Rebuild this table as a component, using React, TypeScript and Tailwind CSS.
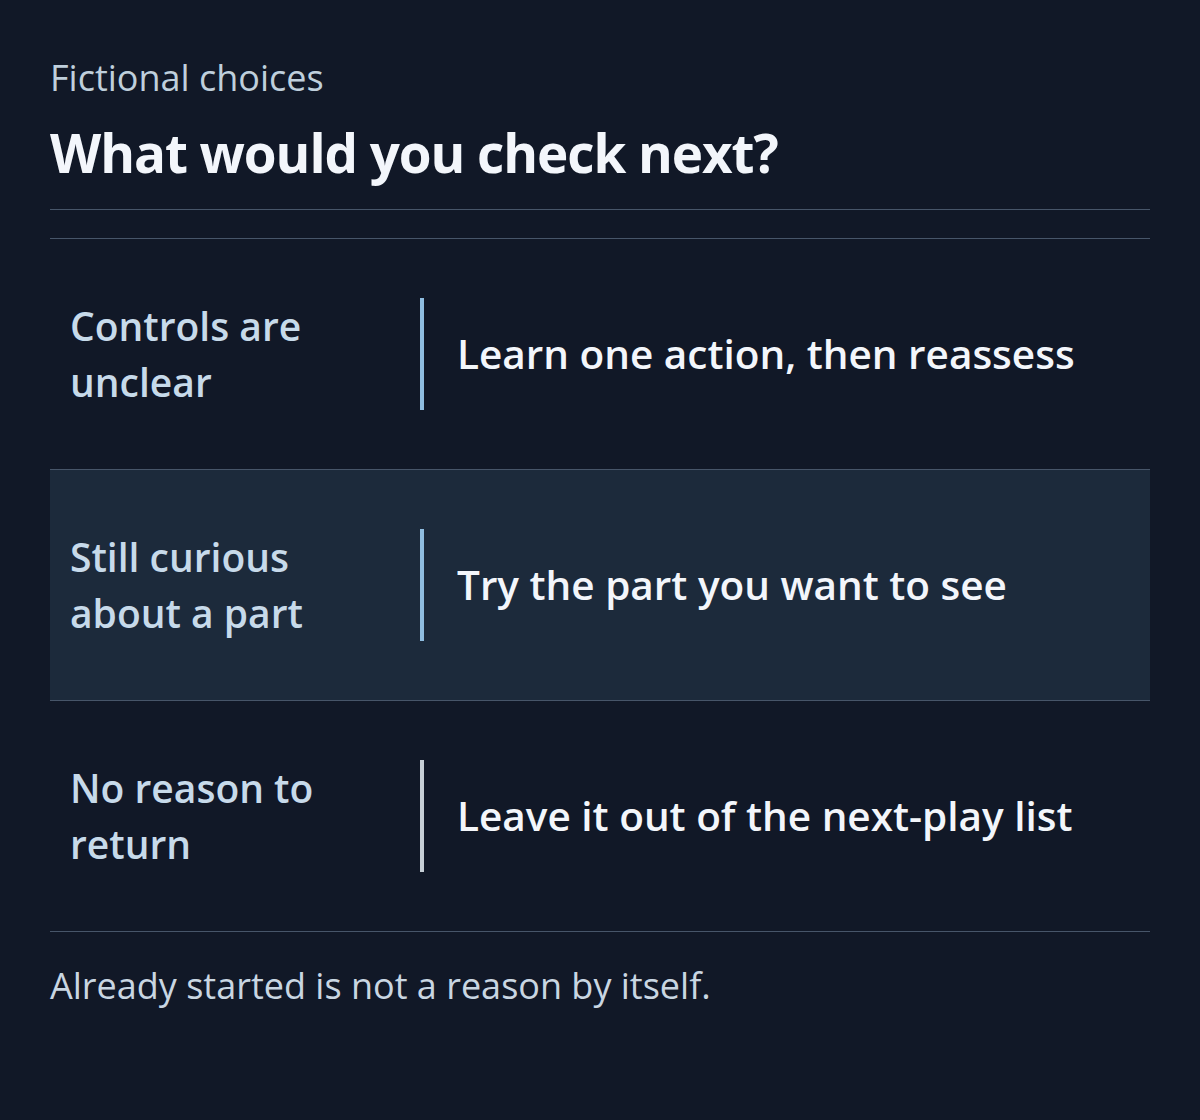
const rows = [
  {
    label: ["Controls are", "unclear"],
    action: "Learn one action, then reassess",
    bar: "bg-[#8fbde0]",
    highlight: false,
  },
  {
    label: ["Still curious", "about a part"],
    action: "Try the part you want to see",
    bar: "bg-[#8fbde0]",
    highlight: true,
  },
  {
    label: ["No reason to", "return"],
    action: "Leave it out of the next-play list",
    bar: "bg-[#c6ced6]",
    highlight: false,
  },
];

export default function App() {
  return (
    <div className="min-h-screen bg-[#111827] px-[50px] pt-[56px] font-['Open_Sans',sans-serif]">
      {/* header */}
      <header className="border-b border-[#475569] pb-[24px]">
        <p className="text-[36px] leading-[44px] text-[#bfcfdc]">Fictional choices</p>
        <h1 className="mt-[21px] text-[53px] leading-[64px] font-bold tracking-[-0.02em] text-[#f3f6fb]">
          What would you check next?
        </h1>
      </header>

      {/* choices */}
      <div className="mt-[28px] border-t border-[#475569]">
        {rows.map((row) => (
          <div
            key={row.action}
            className={`grid grid-cols-[350px_1fr] items-center border-b border-[#475569] px-[20px] py-[59px] ${
              row.highlight ? "bg-[#1c2a3b]" : ""
            }`}
          >
            <p className="text-[39px] leading-[56px] font-semibold text-[#c7daea]">
              {row.label[0]}
              <br />
              {row.label[1]}
            </p>
            <div className="flex items-center self-stretch">
              <span className={`w-[4px] self-stretch ${row.bar}`} />
              <p className="pl-[33px] text-[40.5px] leading-[52px] font-semibold text-[#f3f6fb]">{row.action}</p>
            </div>
          </div>
        ))}
      </div>

      <p className="mt-[32px] text-[36px] leading-[44px] text-[#c9d6e2]">
        Already started is not a reason by itself.
      </p>
    </div>
  );
}
